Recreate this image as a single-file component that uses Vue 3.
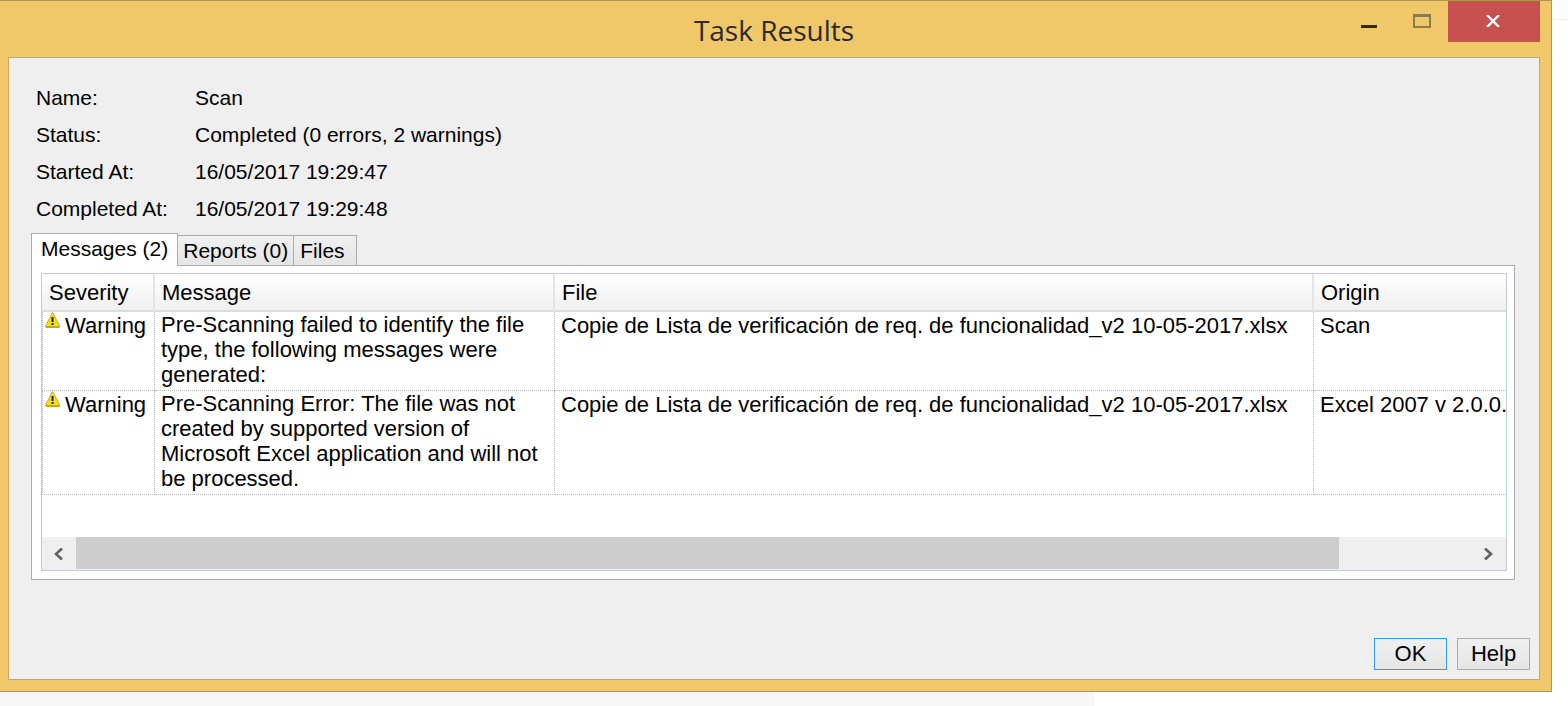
<template>
  <div class="page">
    <div class="window">
      <header class="titlebar">
        <h1 class="title">Task Results</h1>
        <div class="window-controls">
          <button class="control" type="button" aria-label="Minimize">
            <svg width="16" height="16" viewBox="0 0 16 16" shape-rendering="crispEdges">
              <rect x="0" y="12" width="16" height="3" fill="#2a2a2a" />
            </svg>
          </button>
          <button class="control" type="button" aria-label="Maximize">
            <svg width="18" height="14" viewBox="0 0 18 14" shape-rendering="crispEdges">
              <path d="M0 0H18V14H0ZM2 3V12H16V3Z" fill="#8f7a4b" fill-rule="evenodd" />
            </svg>
          </button>
          <button class="control close" type="button" aria-label="Close">
            <svg width="14" height="12" viewBox="0 0 14 12">
              <path d="M1 0L13 12M13 0L1 12" stroke="#fff" stroke-width="2.4" fill="none" />
            </svg>
          </button>
        </div>
      </header>

      <main class="client">
        <dl class="info">
          <template v-for="item in info" :key="item.label">
            <dt>{{ item.label }}</dt>
            <dd>{{ item.value }}</dd>
          </template>
        </dl>

        <div class="tabs" role="tablist">
          <button
            v-for="tab in tabs"
            :key="tab.id"
            class="tab"
            :class="{ active: tab.id === activeTab }"
            type="button"
            role="tab"
            :aria-selected="tab.id === activeTab"
            @click="activeTab = tab.id"
          >
            {{ tab.label }}
          </button>
        </div>

        <section class="pane" role="tabpanel">
          <div class="grid-box">
            <div class="viewport">
              <table v-if="activeTab === 'messages'" class="messages">
                <colgroup>
                  <col class="col-severity" />
                  <col class="col-message" />
                  <col class="col-file" />
                  <col />
                </colgroup>
                <thead>
                  <tr>
                    <th v-for="column in columns" :key="column">{{ column }}</th>
                  </tr>
                </thead>
                <tbody>
                  <tr v-for="(row, index) in messages" :key="index">
                    <td>
                      <div class="severity">
                        <svg width="16" height="16" viewBox="0 1 16 16">
                          <path
                            d="M7 1.2Q7.5 .4 8.1 1.2L14.6 14.2Q14.9 15.2 14 15.3H1.2Q.2 15.2 .6 14.2Z"
                            fill="#f7e018"
                            stroke="#c4ad22"
                          />
                          <path d="M1.2 15H14.4" stroke="#a58a10" />
                          <path d="M7.5 5V10" stroke="#222" stroke-width="2" />
                          <rect x="6.5" y="11" width="2" height="2" fill="#222" />
                        </svg>
                        <span>{{ row.severity }}</span>
                      </div>
                    </td>
                    <td class="message">{{ row.message }}</td>
                    <td>{{ row.file }}</td>
                    <td>{{ row.origin }}</td>
                  </tr>
                </tbody>
              </table>
            </div>
            <div class="scrollbar">
              <button class="arrow" type="button" aria-label="Scroll left">
                <svg width="10" height="12" viewBox="0 0 10 12">
                  <path d="M8 .5L2 6L8 11.5" stroke="#606060" stroke-width="2.6" fill="none" />
                </svg>
              </button>
              <div class="track">
                <div class="thumb"></div>
              </div>
              <button class="arrow" type="button" aria-label="Scroll right">
                <svg width="10" height="12" viewBox="0 0 10 12">
                  <path d="M1 .5L7 6L1 11.5" stroke="#606060" stroke-width="2.6" fill="none" />
                </svg>
              </button>
            </div>
          </div>
        </section>

        <footer class="actions">
          <button class="action default" type="button">OK</button>
          <button class="action" type="button">Help</button>
        </footer>
      </main>
    </div>
    <div class="backdrop-strip"></div>
  </div>
</template>

<script setup>
import { ref } from 'vue'

const activeTab = ref('messages')

const info = [
  { label: 'Name:', value: 'Scan' },
  { label: 'Status:', value: 'Completed (0 errors, 2 warnings)' },
  { label: 'Started At:', value: '16/05/2017 19:29:47' },
  { label: 'Completed At:', value: '16/05/2017 19:29:48' }
]

const tabs = [
  { id: 'messages', label: 'Messages (2)' },
  { id: 'reports', label: 'Reports (0)' },
  { id: 'files', label: 'Files' }
]

const columns = ['Severity', 'Message', 'File', 'Origin']

const messages = [
  {
    severity: 'Warning',
    message: 'Pre-Scanning failed to identify the file type, the following messages were generated:',
    file: 'Copie de Lista de verificación de req. de funcionalidad_v2 10-05-2017.xlsx',
    origin: 'Scan'
  },
  {
    severity: 'Warning',
    message: 'Pre-Scanning Error: The file was not created by supported version of Microsoft Excel application and will not be processed.',
    file: 'Copie de Lista de verificación de req. de funcionalidad_v2 10-05-2017.xlsx',
    origin: 'Excel 2007 v 2.0.0.'
  }
]
</script>

<style>
body {
  margin: 0;
  background: #fff;
}
</style>

<style scoped>
.page {
  min-height: 100vh;
  display: flex;
  flex-direction: column;
  background: linear-gradient(#fcfcfd 19px, #ebeef5 19px, #ebeef5 20px, #fff 20px);
  font-family: "Liberation Sans", Arial, sans-serif;
  font-size: 22px;
  line-height: 25px;
  color: #000;
}

button {
  margin: 0;
  padding: 0;
  border: 0;
  background: none;
  font: inherit;
  color: inherit;
}

.window {
  margin-right: 16px;
  padding: 0 11px 11px 8px;
  border: 1px solid #b5944b;
  border-left: 0;
  background: #f0c869;
}

.titlebar {
  display: grid;
  grid-template-columns: 1fr auto 1fr;
  height: 56px;
}

.title {
  grid-column: 2;
  margin: 0;
  font-family: "Open Sans", "Noto Sans", sans-serif;
  font-size: 28px;
  font-weight: 400;
  line-height: 58px;
  color: #2a2a2a;
}

.window-controls {
  display: flex;
  justify-content: flex-end;
}

.control {
  display: flex;
  align-items: center;
  justify-content: center;
  width: 53px;
  height: 41px;
  padding-bottom: 2px;
}

.close {
  width: 92px;
  padding-right: 2px;
  background: #c75050;
}

.client {
  border: 1px solid #c9a85a;
  padding: 21px 9px 9px 22px;
  background: #efefef;
}

.info {
  display: grid;
  grid-template-columns: 159px 1fr;
  margin: 0 0 6px;
  padding-left: 5px;
  font-size: 21px;
  line-height: 37px;
}

.info dd {
  margin: 0;
}

.tabs {
  display: flex;
  align-items: flex-end;
  font-size: 21px;
}

.tab {
  height: 30px;
  padding: 0 11px 0 6px;
  border: 1px solid #acacac;
  border-left: 0;
  border-bottom: 0;
  background: linear-gradient(#f0f0f0, #e5e5e5);
  white-space: nowrap;
}

.tab:nth-child(2) {
  padding: 0 5px;
}

.tab.active {
  position: relative;
  height: 33px;
  margin-bottom: -1px;
  padding: 0 9px 3px;
  border-left: 1px solid #acacac;
  background: #fff;
}

.pane {
  margin-right: 15px;
  border: 1px solid #acacac;
  padding: 7px 7px 8px 9px;
  background: #fff;
}

.grid-box {
  border: 1px solid #c0ccd8;
}

.viewport {
  min-height: 263px;
  overflow: hidden;
}

.messages {
  width: 1616px;
  table-layout: fixed;
  border-collapse: separate;
  border-spacing: 0;
}

.col-severity {
  width: 113px;
}

.col-message {
  width: 400px;
}

.col-file {
  width: 759px;
}

.messages th {
  height: 36px;
  padding: 0 7px;
  border-right: 2px solid #e4e6e6;
  border-bottom: 2px solid #d9dddd;
  background: linear-gradient(#fff, #f0f0f0);
  font-weight: 400;
  text-align: left;
}

.messages td {
  padding: 1px 6px 2px;
  border-right: 1px dotted #b4b4b4;
  border-bottom: 1px dotted #b4b4b4;
  vertical-align: top;
  white-space: nowrap;
}

.messages td:first-child {
  padding-left: 2px;
  border-left: 1px dotted #b4b4b4;
}

.messages .message {
  padding-top: 0;
  padding-bottom: 3px;
  white-space: normal;
}

.severity {
  display: flex;
  gap: 4px;
}

.severity svg {
  overflow: visible;
}

.scrollbar {
  display: flex;
  height: 33px;
  background: #efefef;
}

.arrow {
  display: flex;
  align-items: center;
  justify-content: center;
  width: 34px;
}

.track {
  flex: 1;
}

.thumb {
  width: 90.5%;
  height: 32px;
  background: #cdcdcd;
}

.actions {
  display: flex;
  justify-content: flex-end;
  gap: 10px;
  margin-top: 58px;
}

.action {
  width: 73px;
  height: 32px;
  padding-bottom: 2px;
  border: 1px solid #acacac;
  background: linear-gradient(#f0f0f0, #e5e5e5);
}

.action.default {
  border-color: #3399ff;
}

.backdrop-strip {
  flex: 1;
  width: 69.8%;
  background: #f7f7f7;
}
</style>
